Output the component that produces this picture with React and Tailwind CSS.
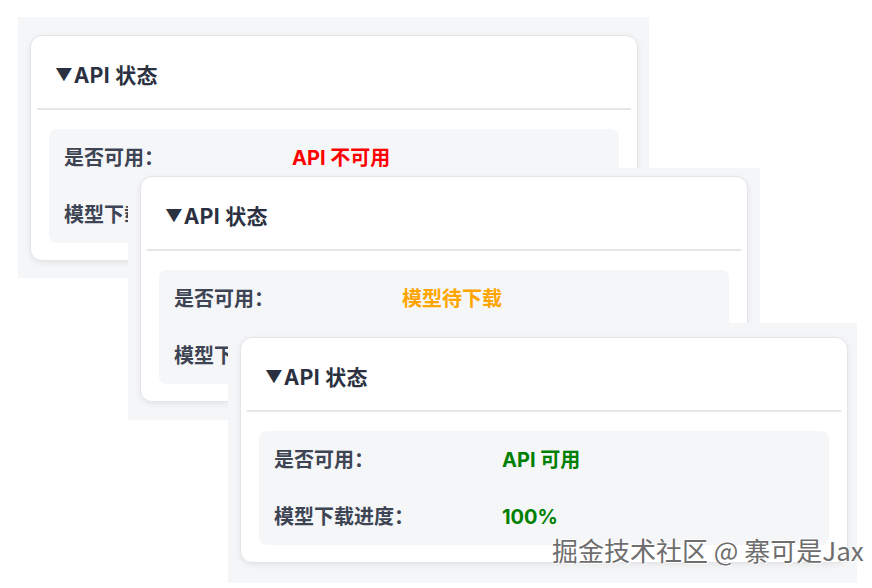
const statusCards = [
    {
        pos: 'left-[18px] top-[17px] w-[631px] h-[261px] pl-[12px] pt-[18px]',
        value: 'API 不可用',
        valueColor: 'text-[#ff0000]',
        progress: '0%',
    },
    {
        pos: 'left-[128px] top-[168px] w-[632px] h-[252px] pl-[12px] pt-[8px]',
        value: '模型待下载',
        valueColor: 'text-[#ffa500]',
        progress: '0%',
    },
    {
        pos: 'left-[228px] top-[323px] w-[629px] h-[260px] pl-[12px] pt-[14px]',
        value: 'API 可用',
        valueColor: 'text-[#008000]',
        progress: '100%',
    },
];

function StatusRow({ label, value, valueColor }) {
    return (
        <div className="flex h-[57px] items-center pl-[15px]">
            <span className="w-[228px] text-[20px] font-bold text-[#3d4453]">{label}</span>
            <span className={`text-[20px] font-bold ${valueColor}`}>{value}</span>
        </div>
    );
}

function StatusCard({ value, valueColor, progress }) {
    return (
        <div className="w-[608px] h-[226px] rounded-[12px] border border-[#e3e5e9] bg-white shadow-[0_2px_6px_rgba(0,0,0,0.07)]">
            <div className="flex h-[72px] items-center pl-[24px] pt-[8px] text-[21px] font-bold text-[#2b3140]">
                <span className="mr-[1px] text-[17px]">▼</span>
                <span className="tracking-[0.3px]">API 状态</span>
            </div>
            <div className="mx-[6px] h-[2px] bg-[#e4e6e9]" />
            <div className="px-[18px] pt-[19px]">
                <div className="rounded-[8px] bg-[#f5f6f8]">
                    <StatusRow label="是否可用：" value={value} valueColor={valueColor} />
                    <StatusRow label="模型下载进度：" value={progress} valueColor={valueColor} />
                </div>
            </div>
        </div>
    );
}

export default function App() {
    return (
        <div className="relative h-[588px] w-[872px] overflow-hidden bg-white font-['Inter','Noto_Sans_CJK_SC',sans-serif]">
            {statusCards.map((c, i) => (
                <div key={i} className={`absolute bg-[#f5f6f8] ${c.pos}`}>
                    <StatusCard value={c.value} valueColor={c.valueColor} progress={c.progress} />
                </div>
            ))}

            {/* watermark */}
            <div className="absolute left-[552px] top-[533px] whitespace-nowrap text-[26px] leading-[34px] text-[#6e6e6e] font-['Noto_Sans_CJK_SC',sans-serif] [text-shadow:0_0_2px_#fff,1px_1px_0_#fff,-1px_-1px_0_#fff]">
                掘金技术社区 @ 寨可是Jax
            </div>
        </div>
    );
}
